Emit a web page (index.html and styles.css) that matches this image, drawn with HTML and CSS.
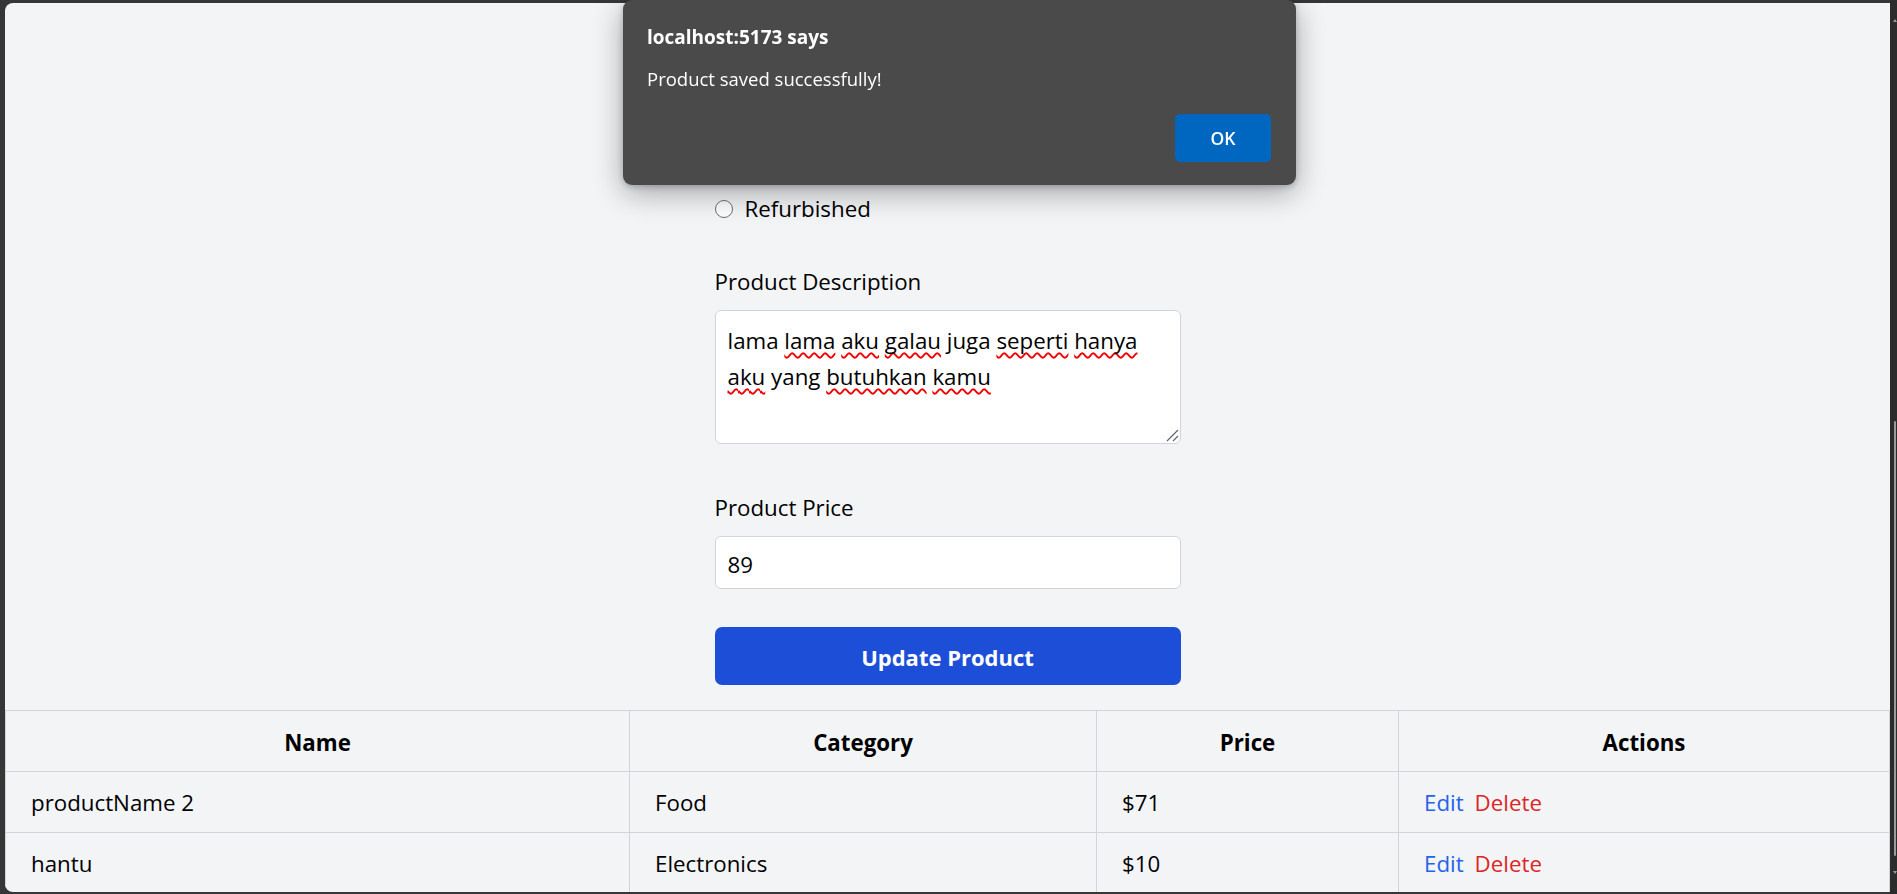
FILE: index.html
```html
<!DOCTYPE html>
<html lang="en">
<head>
<meta charset="utf-8">
<title>Products</title>
<link rel="stylesheet" href="styles.css">
</head>
<body>
<div class="window">
  <main class="viewport">
    <form class="product-form">
      <fieldset class="field">
        <label class="radio"><input type="radio" name="condition"><span>Refurbished</span></label>
      </fieldset>

      <div class="field field-desc">
        <label class="label">Product Description</label>
        <div class="textarea" role="textbox" aria-multiline="true">lama <span class="sp">lama</span> <span class="sp">aku</span> <span class="sp">galau</span> juga <span class="sp">seperti</span> <span class="sp">hanya</span><br><span class="sp">aku</span> yang <span class="sp">butuhkan</span> <span class="sp">kamu</span>
          <svg class="grip" width="13" height="13" viewBox="0 0 13 13"><path d="M1 12 L12 1 M7 12 L12 7" stroke="#5f5f5f" stroke-width="1.1" fill="none"/></svg>
        </div>
      </div>

      <div class="field field-price">
        <label class="label">Product Price</label>
        <input class="input" type="text" value="89">
      </div>

      <button class="submit" type="button">Update Product</button>
    </form>

    <table class="products">
      <colgroup>
        <col class="c-name">
        <col class="c-cat">
        <col class="c-price">
        <col>
      </colgroup>
      <thead>
        <tr><th>Name</th><th>Category</th><th>Price</th><th>Actions</th></tr>
      </thead>
      <tbody>
        <tr>
          <td>productName 2</td><td>Food</td><td>$71</td>
          <td><button class="act edit" type="button">Edit</button><button class="act del" type="button">Delete</button></td>
        </tr>
        <tr>
          <td>hantu</td><td>Electronics</td><td>$10</td>
          <td><button class="act edit" type="button">Edit</button><button class="act del" type="button">Delete</button></td>
        </tr>
      </tbody>
    </table>
  </main>
  <div class="scrollbar">
    <span class="arrow up"></span>
    <span class="thumb"></span>
    <span class="arrow down"></span>
  </div>
</div>

<div class="alert" role="alertdialog">
  <div class="alert-title">localhost:5173 says</div>
  <div class="alert-msg">Product saved successfully!</div>
  <div class="alert-actions"><button class="alert-ok" type="button">OK</button></div>
</div>
</body>
</html>
```

FILE: styles.css
```css
* { box-sizing: border-box; }

html, body {
  margin: 0;
  height: 100%;
}

body {
  background: #363636;
  font-family: "Segoe UI", "Open Sans", "Noto Sans", sans-serif;
  overflow: hidden;
}

.window {
  display: flex;
  height: 894px;
}

.viewport {
  flex: 1;
  margin: 3px 0 2px 5px;
  background: #f3f4f6;
  border-radius: 8px 0 0 8px;
  overflow: hidden;
  color: #000;
  font-size: 22.3px;
  line-height: 36px;
}

/* thin overlay scrollbar in the frame */
.scrollbar {
  width: 7px;
  background: #2c2c2c;
  display: flex;
  flex-direction: column;
  align-items: flex-end;
  padding: 19px 1px 0 0;
}
.arrow {
  width: 0;
  height: 0;
  border-left: 2.5px solid transparent;
  border-right: 2.5px solid transparent;
}
.arrow.up { border-bottom: 3px solid #9a9a9a; margin-right: -1px; }
.arrow.down { border-top: 3px solid #9a9a9a; margin-top: 15px; margin-right: -1px; }
.thumb {
  width: 2px;
  height: 435px;
  margin-top: 399px;
  background: #9b9b9b;
  border-radius: 1px;
}

/* form (page is scrolled: fields above are out of view) */
.product-form {
  width: 466px;
  margin: 0 auto;
  padding: 188px 0 25px;
  display: flex;
  flex-direction: column;
}

.field {
  border: 0;
  margin: 0;
  padding: 0;
  min-width: 0;
  display: flex;
  flex-direction: column;
}

.label {
  display: block;
  margin-bottom: 10px;
}

.radio {
  display: flex;
  align-items: center;
  height: 36px;
}
.radio input {
  appearance: none;
  -webkit-appearance: none;
  width: 18px;
  height: 18px;
  margin: 0 12px 0 0;
  border: 1.5px solid #6f6f6f;
  border-radius: 50%;
  background: #fdfdfd;
}

.field-desc { margin-top: 37px; }

.textarea {
  position: relative;
  height: 134px;
  padding: 12px;
  background: #fff;
  border: 1px solid #d1d5db;
  border-radius: 6px;
  line-height: 36px;
  white-space: nowrap;
}
.sp {
  text-decoration: underline wavy #f00000;
  text-decoration-thickness: 1.5px;
  text-underline-offset: 3px;
  text-decoration-skip-ink: none;
}
.grip {
  position: absolute;
  right: 1px;
  bottom: 1px;
}

.field-price { margin-top: 46px; }

.input {
  height: 53px;
  padding: 3px 12px 0;
  border: 1px solid #d1d5db;
  border-radius: 6px;
  background: #fff;
  font: inherit;
  color: #000;
  line-height: 29px;
}

.submit {
  margin-top: 38px;
  height: 58px;
  border: 0;
  border-radius: 7px;
  background: #1d4ed8;
  color: #fff;
  font-family: inherit;
  font-size: 22px;
  font-weight: 700;
  padding-top: 2px;
}

/* table */
.products {
  width: 100%;
  border-collapse: collapse;
  table-layout: fixed;
}
.c-name { width: 624px; }
.c-cat { width: 467px; }
.c-price { width: 302px; }

.products th,
.products td {
  border: 1px solid #d1d5db;
  padding: 13px 25px 11px;
  line-height: 36px;
  text-align: left;
  font-weight: 400;
  white-space: nowrap;
}
.products th {
  text-align: center;
  font-weight: 700;
  padding-top: 14px;
  padding-bottom: 10px;
}

.act {
  background: none;
  border: 0;
  padding: 0;
  font: inherit;
  line-height: 36px;
  cursor: pointer;
}
.edit { color: #2563eb; margin-right: 11px; }
.del { color: #dc2626; }

/* native-looking alert dialog */
.alert {
  position: fixed;
  top: 0;
  left: 623px;
  width: 673px;
  height: 185px;
  padding: 25px 25px 23px 24px;
  background: #4a4a4a;
  border-radius: 9px;
  box-shadow: 0 8px 30px rgba(0, 0, 0, 0.33), 0 2px 6px rgba(0, 0, 0, 0.2);
  color: #fff;
  display: flex;
  flex-direction: column;
  font-family: "Segoe UI", "Open Sans", "Noto Sans", sans-serif;
}
.alert-title {
  font-size: 19px;
  font-weight: 700;
  line-height: 24px;
}
.alert-msg {
  margin-top: 18px;
  font-size: 18.5px;
  line-height: 24px;
}
.alert-actions {
  margin-top: auto;
  display: flex;
  justify-content: flex-end;
}
.alert-ok {
  width: 96px;
  height: 48px;
  border: 0;
  border-radius: 5px;
  background: #0067c0;
  color: #fff;
  font-family: inherit;
  font-size: 17.5px;
  font-weight: 600;
}
```
